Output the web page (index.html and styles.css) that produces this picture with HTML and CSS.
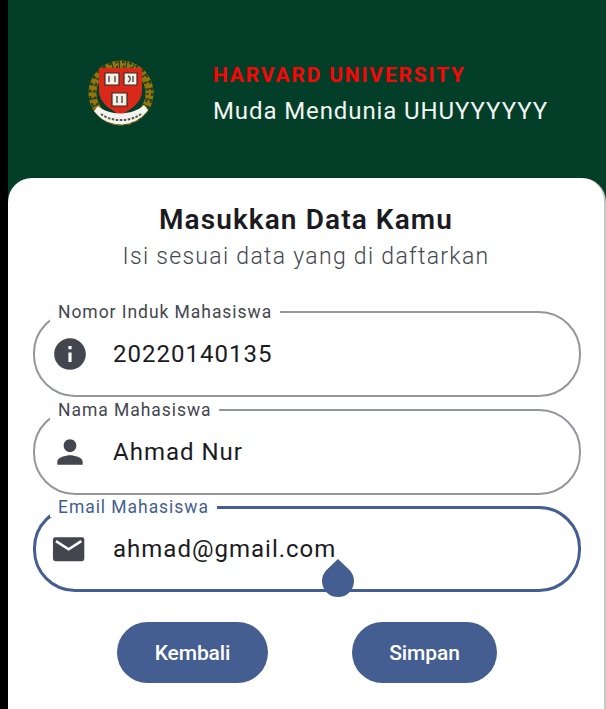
FILE: index.html
```html
<!DOCTYPE html>
<html lang="id">
<head>
    <meta charset="UTF-8">
    <meta name="viewport" content="width=device-width, initial-scale=1.0">
    <title>Masukkan Data Kamu</title>
    <link rel="stylesheet" href="styles.css">
</head>
<body>
    <div class="screen">
        <header class="header">
            <svg class="logo" viewBox="0 0 68 68" width="68" height="68" aria-hidden="true">
                <circle class="wreath" cx="34" cy="33" r="28.500" stroke-dasharray="6 1"/>
                <circle class="wreath-dark" cx="34" cy="33" r="26.500" stroke-dasharray="2 5"/>
                <circle class="wreath-dark" cx="34" cy="33" r="31" stroke-dasharray="3 4"/>
                <path class="shield" d="M12 8H55V31C55 42 45 49 33.500 55C22 49 12 42 12 31Z"/>
                <path class="book" d="M18 13H32V25H18Z"/>
                <path class="book" d="M37 13H50V25H37Z"/>
                <path class="book" d="M25 33H40V46H25Z"/>
                <path class="leaf" d="M22 16V22M28 16V22M41 16C44 17 44 21 41 22M46 16V22M30 36V43M35 36V43"/>
                <path class="ribbon" d="M7 51C20 69 48 69 61 50L57 45C46 56 22 56 11 46Z"/>
                <path class="ribbon-text" d="M14 54C24 62 44 62 54 54" stroke-dasharray="2.500 1.500"/>
            </svg>
            <div class="header-text">
                <div class="univ">HARVARD UNIVERSITY</div>
                <div class="motto">Muda Mendunia UHUYYYYYY</div>
            </div>
        </header>

        <main class="card">
            <h1>Masukkan Data Kamu</h1>
            <p class="subtitle">Isi sesuai data yang di daftarkan</p>

            <form class="form">
                <fieldset class="field">
                    <legend>Nomor Induk Mahasiswa</legend>
                    <div class="field-row">
                        <svg class="icon" viewBox="0 0 24 24" width="38" height="38" aria-hidden="true">
                            <path d="M12 2C6.48 2 2 6.48 2 12s4.48 10 10 10 10-4.48 10-10S17.52 2 12 2zm1 15h-2v-6h2v6zm0-8h-2V7h2v2z"/>
                        </svg>
                        <span class="value">20220140135</span>
                    </div>
                </fieldset>

                <fieldset class="field">
                    <legend>Nama Mahasiswa</legend>
                    <div class="field-row">
                        <svg class="icon" viewBox="0 0 24 24" width="38" height="38" aria-hidden="true">
                            <path d="M12 12c2.21 0 4-1.79 4-4s-1.79-4-4-4-4 1.79-4 4 1.79 4 4 4zm0 2c-2.67 0-8 1.34-8 4v2h16v-2c0-2.66-5.33-4-8-4z"/>
                        </svg>
                        <span class="value">Ahmad Nur</span>
                    </div>
                </fieldset>

                <fieldset class="field active">
                    <legend>Email Mahasiswa</legend>
                    <div class="field-row">
                        <svg class="icon" viewBox="0 0 24 24" width="38" height="38" aria-hidden="true">
                            <rect x="0.600" y="4.500" width="19.800" height="15.200" rx="1.500"/>
                            <path class="mail-flap" d="M2.500 7L10.500 12.200L18.500 7"/>
                        </svg>
                        <span class="value">ahmad@gmail.com</span>
                    </div>
                    <svg class="handle" viewBox="0 0 32 39" width="32" height="39" aria-hidden="true">
                        <path d="M16 0L27.500 11A16 16 0 1 1 4.500 11Z"/>
                    </svg>
                </fieldset>
            </form>

            <div class="actions">
                <button type="button" class="btn btn-back">Kembali</button>
                <button type="button" class="btn btn-save">Simpan</button>
            </div>
        </main>
    </div>
</body>
</html>
```

FILE: styles.css
```css
body, html {
    margin: 0;
    padding: 0;
    height: 100%;
    overflow: hidden;
    font-family: 'Roboto', sans-serif;
}
.screen {
    display: flex;
    flex-direction: column;
    height: 709px;
    border-left: 8px solid #000;
    background-color: #023e28;
}
.header {
    display: flex;
    align-items: center;
    height: 178px;
    flex-shrink: 0;
    padding-left: 79px;
    box-sizing: border-box;
}
.logo {
    margin-top: 9px;
    flex-shrink: 0;
    filter: blur(0.4px);
}
.wreath {
    fill: none;
    stroke: #94740e;
    stroke-width: 8;
}
.wreath-dark {
    fill: none;
    stroke: #2c3a14;
    stroke-width: 2;
}
.shield {
    fill: #d9291a;
}
.book {
    fill: #f1efe6;
    stroke: #3a2a20;
    stroke-width: 1.2;
}
.leaf {
    fill: none;
    stroke: #4a4a44;
    stroke-width: 1.4;
}
.ribbon {
    fill: #f4f3ee;
}
.ribbon-text {
    fill: none;
    stroke: #55554f;
    stroke-width: 2;
}
.header-text {
    margin-left: 58px;
    margin-top: 9px;
}
.univ {
    color: #f90606;
    font-size: 21px;
    font-weight: 700;
    letter-spacing: 1.8px;
    line-height: 24px;
}
.motto {
    color: #f2f5f2;
    font-size: 24px;
    letter-spacing: 0.9px;
    line-height: 26px;
    margin-top: 11px;
}
.card {
    flex: 1;
    background-color: #fff;
    border-right: 2px solid #c8c8c8;
    border-radius: 24px 24px 0 0;
    padding-top: 27px;
    box-sizing: border-box;
}
h1 {
    margin: 0;
    text-align: center;
    color: #1b1b1f;
    font-size: 28px;
    font-weight: 600;
    letter-spacing: 1.1px;
    line-height: 30px;
}
.subtitle {
    margin: 7px 0 0;
    text-align: center;
    color: #44464f;
    font-size: 23px;
    font-weight: 300;
    letter-spacing: 1.3px;
    line-height: 30px;
}
.form {
    display: flex;
    flex-direction: column;
    gap: 2.5px;
    margin: 30px 23px 0 25px;
}
.field {
    position: relative;
    height: 95px;
    box-sizing: border-box;
    margin: 0;
    padding: 0;
    border: 2px solid #94969d;
    border-radius: 42px;
    min-width: 0;
}
.field legend {
    margin-left: 15px;
    padding: 0 8px;
    color: #44464f;
    font-size: 17.5px;
    letter-spacing: 0.95px;
    line-height: 20px;
}
.field-row {
    display: flex;
    align-items: center;
    height: 64px;
    padding-left: 16px;
}
.icon {
    fill: #44464f;
    flex-shrink: 0;
}
.mail-flap {
    fill: none;
    stroke: #fff;
    stroke-width: 1.6;
}
.value {
    margin-left: 24px;
    color: #1b1b1f;
    font-size: 24px;
    letter-spacing: 1px;
}
.active {
    border: 3px solid #445e91;
}
.active legend {
    color: #445e91;
    margin-left: 14px;
}
.active .value {
    margin-left: 23px;
}
.handle {
    position: absolute;
    left: 286px;
    bottom: -17px;
    fill: #445e91;
}
.actions {
    display: flex;
    justify-content: center;
    gap: 84px;
    margin-top: 30px;
    padding-left: 2px;
}
.btn {
    height: 61px;
    border: none;
    border-radius: 31px;
    background-color: #445e91;
    color: #fff;
    font-family: inherit;
    font-size: 21px;
    font-weight: 500;
    letter-spacing: -0.1px;
    cursor: pointer;
}
.btn-back {
    width: 151px;
}
.btn-save {
    width: 145px;
}
```
